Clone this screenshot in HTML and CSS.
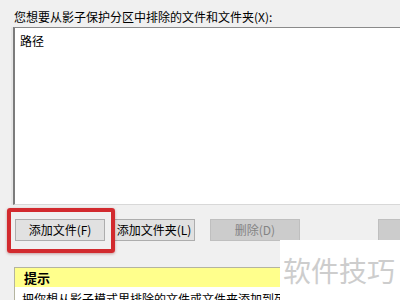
FILE: index.html
```html
<!DOCTYPE html>
<html lang="zh">
<head>
<meta charset="utf-8">
<link rel="stylesheet" href="styles.css">
</head>
<body>
<div class="page">
  <div class="label">您想要从影子保护分区中排除的文件和文件夹(X):</div>
  <div class="listbox">
    <div class="col-head">路径</div>
  </div>
  <div class="buttons">
    <button class="btn btn-add">添加文件(F)</button>
    <button class="btn btn-folder">添加文件夹(L)</button>
    <button class="btn btn-del" disabled>删除(D)</button>
    <button class="btn btn-more"></button>
  </div>
  <div class="tip">
    <div class="tip-head">提示</div>
    <div class="tip-body">把你想从影子模式里排除的文件或文件夹添加到列表中，这些文件或文件夹的修改将被保存。</div>
  </div>
  <div class="highlight"></div>
  <div class="watermark">软件技巧</div>
</div>
</body>
</html>
```

FILE: styles.css
```css
html, body {
  margin: 0;
  padding: 0;
  width: 400px;
  height: 300px;
  overflow: hidden;
  background: #f0f0f0;
}
.page {
  position: relative;
  width: 400px;
  height: 300px;
  overflow: hidden;
  font-family: "Noto Sans CJK SC", "Noto Sans", sans-serif;
  font-size: 12px;
  color: #000;
}
.label {
  padding: 8px 0 0 14px;
  line-height: 17px;
  white-space: nowrap;
}
.listbox {
  margin: 2px 0 0 13px;
  width: 400px;
  height: 176px;
  background: #fff;
  border-top: 1px solid #8a8a8a;
  border-left: 2px solid #7c7c7c;
  border-bottom: 1px solid #d8d8d8;
  box-shadow: -2px 0 0 #e6e6e6;
}
.col-head {
  padding: 4px 5px;
  line-height: 18px;
  font-size: 12px;
}
.buttons {
  display: flex;
  margin-top: 14px;
  padding-left: 15px;
  height: 22px;
}
.btn {
  box-sizing: border-box;
  height: 22px;
  margin: 0;
  padding: 0;
  font-family: inherit;
  font-size: 12px;
  line-height: 20px;
  background: #e1e1e1;
  border: 1px solid #adadad;
  color: #000;
  flex: none;
}
.btn-add { width: 90px; }
.btn-folder { width: 82px; margin-left: 8px; }
.btn-del {
  width: 90px;
  margin-left: 15px;
  background: #cccccc;
  border-color: #bfbfbf;
  color: #838383;
}
.btn-more {
  width: 60px;
  margin-left: 78px;
  background: #cccccc;
  border-color: #bfbfbf;
}
.tip {
  margin: 26px 0 0 14px;
  width: 400px;
  border-top: 1px solid #b4b4a0;
  border-left: 1px solid #b4b4a0;
  background: #fff;
}
.tip-head {
  background: #ffff8c;
  height: 19px;
  padding-left: 9px;
  font-weight: bold;
  font-size: 13px;
  line-height: 19px;
}
.tip-body {
  padding: 4px 8px 0 7px;
  line-height: 16px;
  white-space: nowrap;
}
.highlight {
  position: absolute;
  left: 7px;
  top: 208px;
  width: 108px;
  height: 45px;
  box-sizing: border-box;
  border: 4px solid #d22a2e;
  border-radius: 3px;
  box-shadow: 0 1px 3px rgba(120, 0, 0, 0.35);
}
.watermark {
  position: absolute;
  left: 280px;
  top: 240px;
  width: 120px;
  height: 60px;
  background: #fff;
  color: #cdcdcd;
  font-size: 28px;
  line-height: 60px;
  padding-left: 3px;
  box-sizing: border-box;
  white-space: nowrap;
}
```
